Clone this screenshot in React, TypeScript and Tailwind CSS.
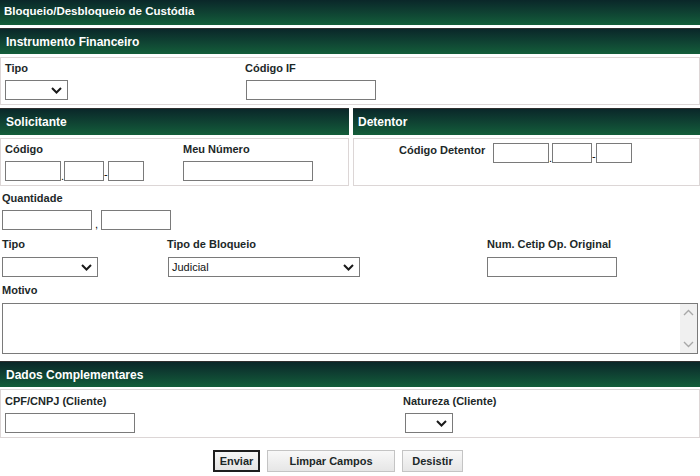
import React from "react";

const hdr =
  "flex items-center bg-linear-to-b from-[#0a2729] to-[#145e3a] text-white font-bold text-[12px] border-t border-[#2e2e2e]";

function Chevron() {
  return (
    <svg width="11" height="7" viewBox="0 0 11 7" className="shrink-0">
      <path d="M1 1 L5.5 5.5 L10 1" fill="none" stroke="#1a1a1a" strokeWidth="2" />
    </svg>
  );
}

function Select({ w, value }: { w: string; value?: string }) {
  return (
    <div className={`${w} h-[20px] border border-[#7a7a7a] bg-white flex items-center justify-between pl-[3px] pr-[5px]`}>
      <span className="text-[11px] text-[#111]">{value ?? ""}</span>
      <Chevron />
    </div>
  );
}

function Input({ w, h = "h-[20px]" }: { w: string; h?: string }) {
  return <div className={`${w} ${h} border border-[#7a7a7a] bg-white`} />;
}

function Label({ children }: { children: React.ReactNode }) {
  return <div className="text-[11px] leading-[13px] font-bold text-[#1c2828] whitespace-nowrap">{children}</div>;
}

export default function App() {
  return (
    <div className="w-[700px] h-[476px] bg-white font-['Liberation_Sans',Arial,sans-serif] flex flex-col overflow-hidden">
      <div className="h-[25px] flex items-center pl-[4px] pb-[1px] bg-linear-to-b from-[#0a2729] to-[#145e3a] text-white font-bold text-[11.5px]">
        Bloqueio/Desbloqueio de Custódia
      </div>

      <div className={`${hdr} mt-[3px] h-[26px] pl-[6px]`}>Instrumento Financeiro</div>
      <div className="mt-[3px] h-[48px] border border-[#dcd6d6] flex pl-[4px] pt-[4px]">
        <div className="w-[240px] flex flex-col gap-[5px]">
          <Label>Tipo</Label>
          <Select w="w-[63px]" />
        </div>
        <div className="flex flex-col gap-[5px]">
          <Label>Código IF</Label>
          <div className="pl-[1px]">
            <Input w="w-[130px]" />
          </div>
        </div>
      </div>

      <div className="mt-[3px] flex gap-[4px]">
        <div className="w-[349px] flex flex-col">
          <div className={`${hdr} h-[27px] pl-[6px]`}>Solicitante</div>
          <div className="mt-[3px] h-[48px] border border-[#dcd6d6] flex pl-[4px] pt-[4px]">
            <div className="w-[178px] flex flex-col gap-[5px]">
              <Label>Código</Label>
              <div className="flex items-end">
                <Input w="w-[56px]" />
                <span className="w-[3px] text-[11px] leading-[10px]">.</span>
                <Input w="w-[40px]" />
                <span className="w-[4px] text-[11px] leading-[14px]">-</span>
                <Input w="w-[36px]" />
              </div>
            </div>
            <div className="flex flex-col gap-[5px]">
              <Label>Meu Número</Label>
              <Input w="w-[130px]" />
            </div>
          </div>
        </div>
        <div className="flex-1 flex flex-col">
          <div className={`${hdr} h-[27px] pl-[5px]`}>Detentor</div>
          <div className="mt-[3px] h-[48px] border border-[#dcd6d6] flex items-start pl-[45px] pt-[4px]">
            <div className="w-[94px] pt-[1px]">
              <Label>Código Detentor</Label>
            </div>
            <div className="flex items-end">
              <Input w="w-[56px]" />
              <span className="w-[3px] text-[11px] leading-[10px]">.</span>
              <Input w="w-[40px]" />
              <span className="w-[4px] text-[11px] leading-[14px]">-</span>
              <Input w="w-[36px]" />
            </div>
          </div>
        </div>
      </div>

      <div className="mt-[6px] pl-[2px] flex flex-col gap-[5px]">
        <Label>Quantidade</Label>
        <div className="flex items-end">
          <Input w="w-[90px]" />
          <span className="w-[9px] text-center text-[11px] leading-[12px]">,</span>
          <Input w="w-[70px]" />
        </div>
      </div>

      <div className="mt-[8px] pl-[2px] flex">
        <div className="w-[165px] flex flex-col gap-[6px]">
          <Label>Tipo</Label>
          <Select w="w-[96px]" />
        </div>
        <div className="w-[320px] flex flex-col gap-[6px]">
          <Label>Tipo de Bloqueio</Label>
          <div className="pl-[1px]">
            <Select w="w-[192px]" value="Judicial" />
          </div>
        </div>
        <div className="flex flex-col gap-[6px]">
          <Label>Num. Cetip Op. Original</Label>
          <Input w="w-[130px]" />
        </div>
      </div>

      <div className="mt-[7px] pl-[2px] pr-[2px] flex flex-col gap-[6px]">
        <Label>Motivo</Label>
        <div className="h-[51px] border border-[#7a7a7a] bg-white flex justify-end">
          <div className="w-[17px] h-full bg-[#f0f0f0] flex flex-col items-center justify-between py-[5px]">
            <svg width="11" height="7" viewBox="0 0 11 7">
              <path d="M1 6 L5.5 1.5 L10 6" fill="none" stroke="#a8a8a8" strokeWidth="1.4" />
            </svg>
            <svg width="11" height="7" viewBox="0 0 11 7">
              <path d="M1 1 L5.5 5.5 L10 1" fill="none" stroke="#a8a8a8" strokeWidth="1.4" />
            </svg>
          </div>
        </div>
      </div>

      <div className={`${hdr} mt-[7px] h-[26px] pl-[6px]`}>Dados Complementares</div>
      <div className="mt-[2px] h-[49px] border border-[#dcd6d6] flex pl-[4px] pt-[5px]">
        <div className="w-[398px] flex flex-col gap-[5px]">
          <Label>CPF/CNPJ (Cliente)</Label>
          <Input w="w-[130px]" />
        </div>
        <div className="flex flex-col gap-[5px]">
          <Label>Natureza (Cliente)</Label>
          <div className="pl-[2px]">
            <Select w="w-[48px]" />
          </div>
        </div>
      </div>

      <div className="mt-[12px] flex gap-[7px] pl-[213px]">
        <button className="w-[47px] h-[22px] border-2 border-[#1e1e1e] bg-linear-to-b from-[#f6f6f6] to-[#e4e4e4] text-[11px] font-bold text-[#1c2828]">
          Enviar
        </button>
        <button className="w-[128px] h-[22px] border border-[#c4c4c4] bg-linear-to-b from-[#f8f8f8] to-[#e6e6e6] text-[11px] font-bold text-[#1c2828]">
          Limpar Campos
        </button>
        <button className="w-[61px] h-[22px] border border-[#c4c4c4] bg-linear-to-b from-[#f8f8f8] to-[#e6e6e6] text-[11px] font-bold text-[#1c2828]">
          Desistir
        </button>
      </div>
    </div>
  );
}
